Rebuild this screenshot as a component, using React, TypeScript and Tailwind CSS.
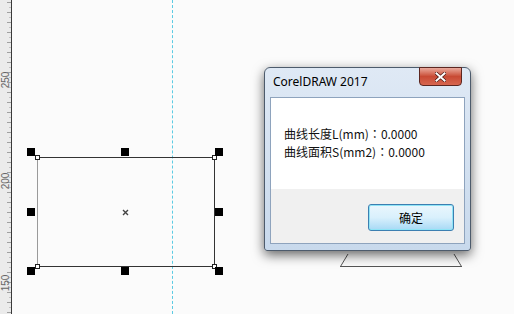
import React from "react";

const ticks = Array.from({ length: 32 }, (_, i) => i * 10 + 2);
const labels = [
  { y: 80, t: "250" },
  { y: 181, t: "200" },
  { y: 283, t: "150" },
];

const handles = [
  [31, 152], [125, 152], [219, 152],
  [31, 212], [219, 212],
  [31, 271], [125, 271], [219, 271],
];

const corners = [
  [37, 157], [214, 157], [37, 266], [214, 266],
];

function Ruler() {
  return (
    <div className="w-[12px] h-full bg-[#ebebeb] border-r border-[#3a3a3a] flex-none">
      <svg width="11" height="314" className="block">
        {ticks.map((y) => (
          <line key={y} x1="7" x2="11" y1={y + 0.5} y2={y + 0.5} stroke="#a0a0a0" strokeWidth="1" />
        ))}
        {ticks.map((y) => (
          <line key={"m" + y} x1="9" x2="11" y1={y + 5.5} y2={y + 5.5} stroke="#c4c4c4" strokeWidth="1" />
        ))}
        {labels.map((l) => (
          <text
            key={l.t}
            x="0"
            y="0"
            fontSize="10"
            fill="#666"
            fontFamily="Liberation Sans, sans-serif"
            textAnchor="middle"
            transform={`translate(9 ${l.y}) rotate(-90)`}
          >
            {l.t}
          </text>
        ))}
      </svg>
    </div>
  );
}

function Colon() {
  return <span className="font-['Noto_Sans_CJK_TC',sans-serif]">：</span>;
}

function Dialog() {
  return (
    <div className="absolute left-[264px] top-[67px] w-[207px] h-[184px] rounded-t-[6px] rounded-b-[3px] border border-[#4d5b6c] bg-gradient-to-b from-[#dfe9f5] to-[#c8d9ec] shadow-[0_4px_12px_rgba(0,0,0,0.6)] flex flex-col px-[5px] pb-[6px]">
      <div className="h-[29px] flex items-center pl-[3px] text-[12px] text-black font-['Noto_Sans',sans-serif] relative">
        <span className="-mt-[1px]">CorelDRAW 2017</span>
        <div className="absolute right-[3px] top-[-1px] w-[43px] h-[19px] rounded-b-[4px] border border-[#5c2620] bg-gradient-to-b from-[#e9a99c] via-[#c84a34] to-[#d7664f] flex items-center justify-center">
          <svg width="11" height="10" viewBox="0 0 11 10">
            <path d="M1.5 1.5 L9.5 8.5 M9.5 1.5 L1.5 8.5" stroke="#4a1a14" strokeWidth="3.4" strokeLinecap="square" />
            <path d="M1.5 1.5 L9.5 8.5 M9.5 1.5 L1.5 8.5" stroke="#ffffff" strokeWidth="2" strokeLinecap="square" />
          </svg>
        </div>
      </div>
      <div className="flex-1 border border-[#8ea3bd] flex flex-col bg-white">
        <div className="h-[91px] bg-white pl-[13px] pt-[27px] text-[12px] leading-[18px] text-[#111] font-['Noto_Sans_CJK_SC',sans-serif]">
          <div>曲线长度L(mm)<Colon />0.0000</div>
          <div>曲线面积S(mm2)<Colon />0.0000</div>
        </div>
        <div className="flex-1 bg-[#f0f0f0] flex justify-end items-start pt-[15px] pr-[10px]">
          <button className="w-[86px] h-[27px] rounded-[3px] border border-[#3c7fb1] bg-gradient-to-b from-[#eaf6fd] via-[#d9f0fc] to-[#a7d9f5] shadow-[inset_0_0_0_1px_#8fe4f6] text-[12px] text-black font-['Noto_Sans_CJK_SC',sans-serif] flex items-center justify-center">
            确定
          </button>
        </div>
      </div>
    </div>
  );
}

export default function App() {
  return (
    <div className="w-[514px] h-[314px] bg-[#fbfbfb] flex overflow-hidden">
      <Ruler />
      <div className="relative flex-1 -ml-[12px]">
        <div className="absolute left-[172px] top-0 h-full border-l border-dashed border-[#5ccbe3]" />

        <div className="absolute left-[37px] top-[157px] w-[178px] h-[110px] border border-[#333] border-l-[#9a9a9a]" />
        {corners.map(([x, y]) => (
          <div
            key={x + "-" + y}
            className="absolute w-[5px] h-[5px] bg-white border border-[#222]"
            style={{ left: x - 2, top: y - 2 }}
          />
        ))}
        {handles.map(([x, y]) => (
          <div
            key={x + "_" + y}
            className="absolute w-[8px] h-[8px] bg-black"
            style={{ left: x - 4, top: y - 4 }}
          />
        ))}
        <svg className="absolute left-[122px] top-[209px]" width="7" height="7" viewBox="0 0 7 7">
          <path d="M1 1 L6 6 M6 1 L1 6" stroke="#444" strokeWidth="1.4" />
        </svg>

        <svg className="absolute left-[336px] top-[250px]" width="130" height="20" viewBox="0 0 130 20">
          <path d="M4.5 16.5 L12 4 M118 4 L125.5 16.5 M4 16.5 L126 16.5" stroke="#555" strokeWidth="1" fill="none" />
        </svg>

        <Dialog />
      </div>
    </div>
  );
}
